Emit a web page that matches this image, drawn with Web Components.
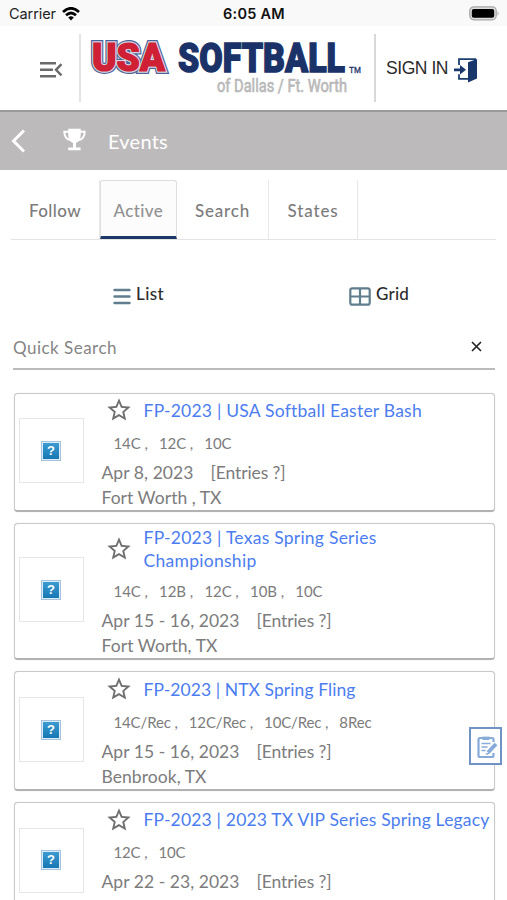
<!DOCTYPE html>
<html lang="en">
<head>
<meta charset="UTF-8">
<meta name="viewport" content="width=device-width, initial-scale=1">
<title>Events</title>
<style>
    body {
        margin: 0;
        background: #fff;
        overflow: hidden;
        height: 900px;
        font-family: Lato, "Open Sans", sans-serif;
        --muted: #7c7c7c;
        --link: #4b7df0;
        --navy: #1d3768;
    }
</style>
</head>
<body>
<events-app></events-app>

<script>
// Text run spread to a given width with letter spacing
class FitText extends HTMLElement {
    constructor() {
        super();
        this.attachShadow({ mode: 'open' });
        this.shadowRoot.innerHTML = `
            <style>
                :host { display: inline-block; white-space: pre; }
            </style>
            <span><slot></slot></span>
        `.trim().replace(/>\s+</g, '><');
    }

    connectedCallback() {
        const width = Number(this.getAttribute('width'));
        const span = this.shadowRoot.querySelector('span');
        const count = this.textContent.length;
        const natural = span.getBoundingClientRect().width;
        if (!natural || !count) return;
        span.style.letterSpacing = `${(width - natural) / count}px`;
        this.style.width = `${width}px`;
    }
}

class StatusBar extends HTMLElement {
    constructor() {
        super();
        this.attachShadow({ mode: 'open' });
        this.shadowRoot.innerHTML = `
            <style>
                :host {
                    display: grid;
                    grid-template-columns: 1fr auto 1fr;
                    align-items: center;
                    height: 26px;
                    box-sizing: border-box;
                    padding: 1px 7px 0 9px;
                    background: #f9f9f9;
                    color: #222;
                    font: 14.5px Inter, sans-serif;
                }
                .left { display: flex; align-items: center; gap: 6px; }
                .time { color: #111; font-weight: 600; margin-right: 1px; }
                .battery { justify-self: end; display: block; }
            </style>
            <div class="left">
                <fit-text width="47">Carrier</fit-text>
                <svg width="18" height="14" viewBox="0 0 18 14" fill="none" stroke="#000" stroke-width="2.7">
                    <path d="M1 5Q9-2.4 17 5M4 8.2q5-4.4 10 0"/>
                    <path d="M9 13.4 6.2 10.4q2.8-2.3 5.6 0z" fill="#000" stroke="none"/>
                </svg>
            </div>
            <fit-text class="time" width="62">6:05 AM</fit-text>
            <svg class="battery" width="31" height="15" viewBox="0 0 31 15">
                <rect x=".8" y=".8" width="26.4" height="13" rx="4" fill="#ddd" stroke="#a8a8a8" stroke-width="1.3"/>
                <path d="M28.6 5v5q2-2.5 0-5z" fill="#aaa"/>
                <rect x="2.8" y="2.9" width="22.4" height="8.8" rx="2" fill="#000"/>
            </svg>
        `;
    }
}

class SiteHeader extends HTMLElement {
    constructor() {
        super();
        this.attachShadow({ mode: 'open' });
        this.shadowRoot.innerHTML = `
            <style>
                :host {
                    display: flex;
                    height: 84px;
                    background: #fff;
                }
                .menu {
                    width: 79px;
                    box-sizing: border-box;
                    padding: 35px 0 0 40px;
                }
                .logo {
                    width: 293px;
                    height: 68px;
                    margin-top: 8px;
                    border-left: 2px solid #e3e3e3;
                    border-right: 2px solid #d9d9d9;
                }
                .sign-in {
                    display: flex;
                    align-items: center;
                    gap: 6px;
                    padding-left: 10px;
                    color: #2b2b2b;
                    font: 17.5px/86px "Liberation Sans", sans-serif;
                }
                .sign-in svg { margin-top: 4px; }
                svg { display: block; }
            </style>
            <div class="menu">
                <svg width="23" height="17" viewBox="0 0 23 17" fill="none" stroke="#6b6b6b" stroke-width="2.4">
                    <path d="M0 2.2h16M0 8.8h13M0 15.3h16M21.5 3.2 16 8.8l5.5 5.5"/>
                </svg>
            </div>
            <div class="logo">
                <svg width="293" height="68" viewBox="0 0 293 68" font-family="'Liberation Sans', sans-serif">
                    <g font-family="Roboto, sans-serif" font-weight="900">
                        <text x="11" y="37" font-size="38" textLength="73" lengthAdjust="spacingAndGlyphs" fill="#cf2036" stroke="#4b639a" stroke-width="6" paint-order="stroke">USA</text>
                        <text x="11" y="37" font-size="38" textLength="73" lengthAdjust="spacingAndGlyphs" fill="#cf2036" stroke="#d4d5df" stroke-width="3.6" paint-order="stroke">USA</text>
                        <text x="11" y="37" font-size="38" textLength="73" lengthAdjust="spacingAndGlyphs" fill="#cf2036" stroke="#cf2036" stroke-width="1.2">USA</text>
                        <text x="97" y="38" font-size="40" textLength="167" lengthAdjust="spacingAndGlyphs" fill="#1a3268" stroke="#1a3268" stroke-width="1.4">SOFTBALL</text>
                    </g>
                    <text x="268" y="38.5" font-size="9" textLength="12" lengthAdjust="spacingAndGlyphs" fill="#1a3268" stroke="#1a3268" stroke-width=".3">TM</text>
                    <text x="136" y="57.5" font-size="18.5" font-family="Roboto, sans-serif" textLength="130" lengthAdjust="spacingAndGlyphs" fill="#b9b9b9" stroke="#b9b9b9" stroke-width=".7">of Dallas / Ft. Worth</text>
                </svg>
            </div>
            <div class="sign-in">
                <fit-text width="62">SIGN IN</fit-text>
                <svg width="24" height="26" viewBox="0 0 24 26">
                    <path d="M5 8V2.2h17M5 17.3v4.5h9" fill="none" stroke="#1d3f70" stroke-width="1.8"/>
                    <path d="M14 5.2 23 2v19.5l-9 4z" fill="#1a376b"/>
                    <path d="M0 11.4h6V8l6 4.8-6 4.8v-3.4H0z" fill="#1a376b"/>
                </svg>
            </div>
        `;
    }
}

class TitleBar extends HTMLElement {
    constructor() {
        super();
        this.attachShadow({ mode: 'open' });
        this.shadowRoot.innerHTML = `
            <style>
                :host {
                    display: flex;
                    align-items: center;
                    height: 60px;
                    box-sizing: border-box;
                    border-top: 2px solid #999;
                    padding-left: 11px;
                    background: #bcbabb;
                    color: #fff;
                    font-size: 20px;
                }
                .trophy { margin: 0 22px 3px 37px; }
            </style>
            <svg width="15" height="24" viewBox="0 0 15 24" fill="none" stroke="#fff" stroke-width="3">
                <path d="M13 1.5 2.5 12 13 22.5"/>
            </svg>
            <svg class="trophy" width="23" height="23" viewBox="0 0 23 23">
                <path d="M5.5 3.7H1.3q0 7.5 6.7 8.6M17.5 3.7h4.2q0 7.5-6.7 8.6" fill="none" stroke="#fff" stroke-width="2"/>
                <path d="M5.2.7h12.6v5.5q0 6.600-4.800 8.800v4.500h4.600v2.800H5.200v-2.800H10V15q-4.800-2.200-4.800-8.800z" fill="#fff"/>
            </svg>
            <slot></slot>
        `;
    }
}

class TabItem extends HTMLElement {
    constructor() {
        super();
        this.attachShadow({ mode: 'open' });
        this.shadowRoot.innerHTML = `
            <style>
                :host {
                    display: flex;
                    align-items: center;
                    justify-content: center;
                    box-sizing: border-box;
                    height: 59px;
                    padding-top: 2px;
                    border-right: 1px solid #e8e8e8;
                    color: var(--muted);
                    font-size: 17px;
                    font-weight: 500;
                }
                :host([active]) {
                    border: 1px solid #dedede;
                    border-bottom: 3px solid var(--navy);
                    border-radius: 3px 3px 0 0;
                    background: #fcfcfc;
                    color: #919191;
                    padding-top: 4px;
                }
            </style>
            <slot></slot>
        `;
    }
}

class TabBar extends HTMLElement {
    constructor() {
        super();
        this.attachShadow({ mode: 'open' });
        this.shadowRoot.innerHTML = `
            <style>
                :host {
                    display: grid;
                    grid-template-columns: 89px 77px 92px 89px;
                    margin: 10px 11px 0;
                    border-bottom: 1px solid #e4e4e4;
                }
            </style>
            <slot></slot>
        `;
    }
}

class ViewSwitch extends HTMLElement {
    constructor() {
        super();
        this.attachShadow({ mode: 'open' });
        this.shadowRoot.innerHTML = `
            <style>
                :host {
                    display: grid;
                    grid-template-columns: 236px 1fr;
                    padding: 42px 0 0 113px;
                    color: #2c2c2c;
                    font-size: 17px;
                    font-weight: 500;
                    line-height: 24px;
                }
                div { display: flex; align-items: center; gap: 5px; }
                svg { margin-top: 4px; }
            </style>
            <div>
                <svg width="18" height="17" viewBox="0 0 18 17" stroke="#607e8d" stroke-width="2.4" stroke-linecap="round">
                    <path d="M1.500 2h15M1.500 8.500h15M1.500 15h15"/>
                </svg>
                <fit-text width="28">List</fit-text>
            </div>
            <div>
                <svg width="22" height="19" viewBox="0 0 22 19" fill="none" stroke="#607e8d" stroke-width="2.200">
                    <rect x="1.300" y="1.300" width="19.400" height="16.400" rx="2"/>
                    <path d="M11 1v17M1 9.500h20"/>
                </svg>
                <fit-text width="33">Grid</fit-text>
            </div>
        `;
    }
}

class QuickSearch extends HTMLElement {
    constructor() {
        super();
        this.attachShadow({ mode: 'open' });
        this.shadowRoot.innerHTML = `
            <style>
                :host {
                    display: flex;
                    align-items: center;
                    justify-content: space-between;
                    height: 42px;
                    margin: 20px 12px 0 13px;
                    padding-right: 13px;
                    border-bottom: 2px solid #bbb;
                    color: #858585;
                    font-size: 17px;
                }
                svg { margin-bottom: 1px; }
            </style>
            <fit-text width="104">Quick Search</fit-text>
            <svg width="11" height="11" viewBox="0 0 11 11" stroke="#222" stroke-width="1.600">
                <path d="M1 1l9 9M10 1l-9 9"/>
            </svg>
        `;
    }
}

class EventCard extends HTMLElement {
    constructor() {
        super();
        this.attachShadow({ mode: 'open' });
        this.shadowRoot.innerHTML = `
            <style>
                :host {
                    display: flex;
                    align-items: center;
                    box-sizing: border-box;
                    border: 1px solid #c9c9c9;
                    border-bottom: 2px solid #b2b2b2;
                    border-radius: 4px;
                    padding-left: 4px;
                    background: #fff;
                    color: var(--muted);
                    font-size: 17.5px;
                    box-shadow: 0 0 1px #ccc;
                }
                .thumb {
                    display: flex;
                    align-items: center;
                    justify-content: center;
                    width: 65px;
                    height: 65px;
                    box-sizing: border-box;
                    margin: 0 18px 2px 0;
                    border: 1px solid #e6e6e6;
                }
                .mark {
                    width: 16px;
                    height: 16px;
                    border: 1px solid #dcecf8;
                    outline: 1px solid #a5c2df;
                    background: linear-gradient(#3c9bd0, #1677b4);
                    color: #fff;
                    font: 700 13px/16px "Liberation Sans", sans-serif;
                    text-align: center;
                }
                .details { white-space: nowrap; }
                .title { display: flex; align-items: center; color: var(--link); height: 33px; line-height: 23px; }
                :host([tall]) .title { height: 51px; }
                .star { margin: 0 11px 0 3px; flex: none; }
                .codes { height: 32px; line-height: 33px; padding-left: 12px; font-size: 15px; }
                .date { height: 26px; line-height: 27px; display: flex; gap: 17px; }
                .place { height: 25px; line-height: 25px; }
            </style>
            <div class="thumb"><div class="mark">?</div></div>
            <div class="details">
                <div class="title">
                    <svg class="star" width="28" height="28" viewBox="0 0 24 24" fill="#6f6f6f">
                        <path d="M22 9.240l-7.190-.620L12 2 9.190 8.630 2 9.240l5.460 4.730L5.820 21 12 17.270 18.180 21l-1.630-7.030L22 9.240zM12 15.400l-3.760 2.270 1-4.280-3.320-2.880 4.380-.380L12 6.100l1.710 4.040 4.380.380-3.320 2.880 1 4.280L12 15.400z"/>
                    </svg>
                    <slot name="title"></slot>
                </div>
                <div class="codes"><slot name="codes"></slot></div>
                <div class="date"><slot name="date"></slot><fit-text width="75">[Entries ?]</fit-text></div>
                <div class="place"><slot name="place"></slot></div>
            </div>
        `;
    }
}

class NoteButton extends HTMLElement {
    constructor() {
        super();
        this.attachShadow({ mode: 'open' });
        this.shadowRoot.innerHTML = `
            <style>
                :host {
                    position: absolute;
                    left: 469px;
                    top: 727px;
                    width: 29px;
                    height: 34px;
                    border: 2px solid #6f93c4;
                    background: #fff;
                }
                svg { display: block; margin: 7px 0 0 5px; }
            </style>
            <svg width="23" height="23" viewBox="0 0 23 23" fill="none" stroke="#86abd9" stroke-width="2.200">
                <path d="M17.500 6V3.500q0-1.500-1.500-1.500H4Q2.500 2 2.500 3.500v16Q2.500 21 4 21h12q1.500 0 1.500-1.500V17"/>
                <path d="M6.500 2.300h7" stroke-width="3.400"/>
                <path d="M5.500 7.500h9M5.500 11h6M5.500 14.500h4" stroke-width="1.500"/>
                <path d="M12 16.500 20 8" stroke-width="4"/>
                <path d="M10 18.300l3-1" stroke-width="1.500"/>
            </svg>
        `;
    }
}

class EventsApp extends HTMLElement {
    constructor() {
        super();
        this.attachShadow({ mode: 'open' });
        this.shadowRoot.innerHTML = `
            <style>
                :host { display: block; height: 900px; overflow: hidden; position: relative; }
                .list {
                    display: grid;
                    grid-template-rows: 119px 137px 120px 119px;
                    row-gap: 11.300px;
                    margin: 22.500px 12.500px 0 13.500px;
                }
            </style>
            <status-bar></status-bar>
            <site-header></site-header>
            <title-bar><fit-text width="60">Events</fit-text></title-bar>
            <tab-bar>
                <tab-item><fit-text width="52">Follow</fit-text></tab-item>
                <tab-item active><fit-text width="50">Active</fit-text></tab-item>
                <tab-item><fit-text width="55">Search</fit-text></tab-item>
                <tab-item><fit-text width="51">States</fit-text></tab-item>
            </tab-bar>
            <view-switch></view-switch>
            <quick-search></quick-search>
            <div class="list">
                <event-card>
                    <fit-text slot="title" width="278">FP-2023 | USA Softball Easter Bash</fit-text>
                    <fit-text slot="codes" width="118">14C ,   12C ,   10C</fit-text>
                    <fit-text slot="date" width="92">Apr 8, 2023</fit-text>
                    <fit-text slot="place" width="120">Fort Worth , TX</fit-text>
                </event-card>
                <event-card tall>
                    <div slot="title">
                        <fit-text width="233">FP-2023 | Texas Spring Series</fit-text><br>
                        <fit-text width="113">Championship</fit-text>
                    </div>
                    <fit-text slot="codes" width="209">14C ,   12B ,   12C ,   10B ,   10C</fit-text>
                    <fit-text slot="date" width="138">Apr 15 - 16, 2023</fit-text>
                    <fit-text slot="place" width="116">Fort Worth, TX</fit-text>
                </event-card>
                <event-card>
                    <fit-text slot="title" width="212">FP-2023 | NTX Spring Fling</fit-text>
                    <fit-text slot="codes" width="258">14C/Rec ,   12C/Rec ,   10C/Rec ,   8Rec</fit-text>
                    <fit-text slot="date" width="138">Apr 15 - 16, 2023</fit-text>
                    <fit-text slot="place" width="105">Benbrook, TX</fit-text>
                </event-card>
                <event-card>
                    <fit-text slot="title" width="346">FP-2023 | 2023 TX VIP Series Spring Legacy</fit-text>
                    <fit-text slot="codes" width="72">12C ,   10C</fit-text>
                    <fit-text slot="date" width="138">Apr 22 - 23, 2023</fit-text>
                </event-card>
            </div>
            <note-button></note-button>
        `;
    }
}

customElements.define('status-bar', StatusBar);
customElements.define('site-header', SiteHeader);
customElements.define('title-bar', TitleBar);
customElements.define('tab-item', TabItem);
customElements.define('tab-bar', TabBar);
customElements.define('view-switch', ViewSwitch);
customElements.define('quick-search', QuickSearch);
customElements.define('event-card', EventCard);
customElements.define('note-button', NoteButton);
customElements.define('events-app', EventsApp);
// Defined last: the text is measured inside its final layout
customElements.define('fit-text', FitText);
</script>
</body>
</html>
